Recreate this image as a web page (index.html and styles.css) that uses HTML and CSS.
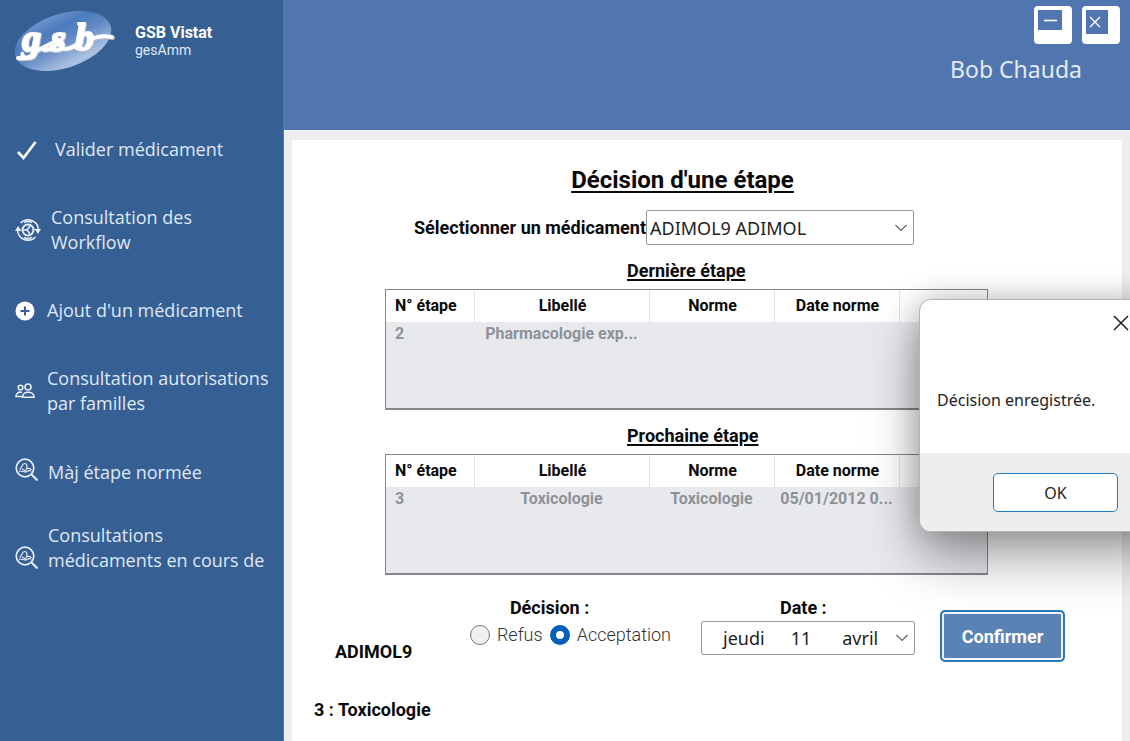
FILE: index.html
```html
<!DOCTYPE html>
<html lang="fr">
<head>
<meta charset="utf-8">
<title>GSB Vistat - gesAmm</title>
<link rel="stylesheet" href="styles.css">
</head>
<body>
<div class="app">
  <aside class="sidebar">
    <div class="brand">
      <svg class="logo" viewBox="0 0 100 64" role="img" aria-label="gsb">
        <defs>
          <linearGradient id="oval" x1="0" y1="0" x2="0.300" y2="1">
            <stop offset="0" stop-color="#7fa3d6"/>
            <stop offset="0.350" stop-color="#4b7abc"/>
            <stop offset="0.600" stop-color="#5f88c4"/>
            <stop offset="1" stop-color="#a9bfe0"/>
          </linearGradient>
        </defs>
        <ellipse cx="49" cy="32" rx="50" ry="27" transform="rotate(-18 49 32)" fill="url(#oval)"/>
        <g class="logo-mark">
          <path class="logo-swash" d="M4 49Q15 51 22 42L38 34M30 41Q38 42 48 30M50 40Q58 40 67 32M80 29Q87 26 98 28"/>
          <text x="8" y="42" class="logo-text">g</text>
          <text x="37" y="42" class="logo-text">s</text>
          <text x="61" y="41" class="logo-text">b</text>
        </g>
      </svg>
      <div class="brand-text">
        <strong>GSB Vistat</strong>
        <span>gesAmm</span>
      </div>
    </div>
    <nav class="nav">
      <a href="#" class="nav-item nav-check">
        <svg width="20" height="20" viewBox="0 0 20 20"><path d="M1 12 L6.500 18 L18.500 2" fill="none" stroke="#fff" stroke-width="2.600"/></svg>
        <span>Valider médicament</span>
      </a>
      <a href="#" class="nav-item nav-flow">
        <svg width="26" height="24" viewBox="0 0 26 24" fill="none" stroke="#e6eef8" stroke-width="1.500"><circle cx="13" cy="12" r="5.500" stroke-width="2"/><path d="M8 12h4l3-4M12 12l3 4"/><path d="M5.500 5A10.400 10.400 0 0 1 23.400 12M20.500 19A10.400 10.400 0 0 1 2.600 12M9 4.600A8.400 8.400 0 0 1 17 4.600M17 19.400A8.400 8.400 0 0 1 9 19.400"/><path d="M0 13l3-5 3.500 5zM19.500 11H26l-3 5z" fill="#e6eef8" stroke="none"/></svg>
        <span>Consultation des Workflow</span>
      </a>
      <a href="#" class="nav-item nav-add">
        <svg width="20" height="20" viewBox="0 0 20 20"><circle cx="10" cy="10" r="9.500" fill="#fff"/><path d="M10 5.500v9M5.500 10h9" stroke="#365f94" stroke-width="2"/></svg>
        <span>Ajout d'un médicament</span>
      </a>
      <a href="#" class="nav-item nav-family">
        <svg width="20" height="16" viewBox="0 0 20 16" fill="none" stroke="#e6eef8" stroke-width="1.600"><circle cx="5.500" cy="4.500" r="2.300"/><circle cx="13" cy="4" r="3"/><path d="M7.500 14.200c0-6.700 11.500-6.700 11.500 0zM7 13.500H1c0-3.500 3-5 6-4"/></svg>
        <span>Consultation autorisations par familles</span>
      </a>
      <a href="#" class="nav-item nav-step">
        <svg width="24" height="24" viewBox="0 0 24 24" fill="none" stroke="#e6eef8"><circle cx="10" cy="10" r="8.800" stroke-width="1.700"/><path d="M16.500 16.500l6 6" stroke-width="2"/><path d="M4.500 11.500c2-1 2.500-6 5-6s3 3 2 5.500c2-1 4-.500 5 1M4 13.500c3-2 5 2 8 0s4 0 4 0M7 11l4 2" stroke-width="1.200"/></svg>
        <span>Màj étape normée</span>
      </a>
      <a href="#" class="nav-item nav-current">
        <svg width="24" height="24" viewBox="0 0 24 24" fill="none" stroke="#e6eef8"><circle cx="10" cy="10" r="8.800" stroke-width="1.700"/><path d="M16.500 16.500l6 6" stroke-width="2"/><path d="M4.500 11.500c2-1 2.500-6 5-6s3 3 2 5.500c2-1 4-.500 5 1M4 13.500c3-2 5 2 8 0s4 0 4 0M7 11l4 2" stroke-width="1.200"/></svg>
        <span>Consultations médicaments en cours de</span>
      </a>
    </nav>
  </aside>

  <div class="workspace">
    <header class="topbar">
      <div class="window-buttons">
        <button type="button" class="win-btn" aria-label="Réduire"><svg width="24" height="20" viewBox="0 0 24 20"><path d="M0 0h24v20H0z" fill="#5175af"/><path d="M6 10.500h13" stroke="#fff" stroke-width="1.600"/></svg></button>
        <button type="button" class="win-btn" aria-label="Fermer"><svg width="22" height="24" viewBox="0 0 22 24"><path d="M0 0h22v24H0z" fill="#5175af"/><path d="M4 7l10 10M14 7L4 17" stroke="#fff" stroke-width="1.400"/></svg></button>
      </div>
      <span class="user">Bob Chauda</span>
    </header>

    <main class="page">
      <section class="panel">
        <div class="content">
          <h1 class="title">Décision d'une étape</h1>
          <div class="picker">
            <label for="med">Sélectionner un médicament</label>
            <div class="select-box">
              <select id="med"><option>ADIMOL9 ADIMOL</option></select>
              <svg class="chevron" width="12" height="8" viewBox="0 0 12 8"><path d="M.500 1l5.500 5.500L11.500 1" fill="none" stroke="#666" stroke-width="1.200"/></svg>
            </div>
          </div>

          <h2 class="subtitle">Dernière étape</h2>
          <div class="grid-box">
            <table class="grid">
              <colgroup><col class="c-num"><col class="c-label"><col class="c-norm"><col class="c-norm"><col></colgroup>
              <thead><tr><th>N° étape</th><th>Libellé</th><th>Norme</th><th>Date norme</th><th></th></tr></thead>
              <tbody><tr><td>2</td><td>Pharmacologie exp...</td><td></td><td></td><td></td></tr></tbody>
            </table>
          </div>

          <h2 class="subtitle">Prochaine étape</h2>
          <div class="grid-box">
            <table class="grid">
              <colgroup><col class="c-num"><col class="c-label"><col class="c-norm"><col class="c-norm"><col></colgroup>
              <thead><tr><th>N° étape</th><th>Libellé</th><th>Norme</th><th>Date norme</th><th></th></tr></thead>
              <tbody><tr><td>3</td><td>Toxicologie</td><td>Toxicologie</td><td>05/01/2012 0...</td><td></td></tr></tbody>
            </table>
          </div>
        </div>

        <form class="decision">
          <strong class="code">ADIMOL9</strong>
          <fieldset class="choice">
            <legend>Décision :</legend>
            <div class="radios">
              <label><input type="radio" name="decision">Refus</label>
              <label><input type="radio" name="decision" checked>Acceptation</label>
            </div>
          </fieldset>
          <div class="date">
            <label for="date">Date :</label>
            <button type="button" id="date" class="date-btn">
              <span>jeudi</span><span>11</span><span>avril</span>
              <svg width="12" height="8" viewBox="0 0 12 8"><path d="M.500 1l5.500 5.500L11.500 1" fill="none" stroke="#666" stroke-width="1.200"/></svg>
            </button>
          </div>
          <button type="button" class="confirm">Confirmer</button>
        </form>
        <strong class="step">3 : Toxicologie</strong>
      </section>
    </main>
  </div>

  <div class="dialog" role="dialog" aria-label="Décision enregistrée">
    <div class="dialog-body">
      <button type="button" class="dialog-close" aria-label="Fermer"><svg width="16" height="16" viewBox="0 0 16 16"><path d="M1 1l14 14M15 1L1 15" stroke="#222" stroke-width="1.500"/></svg></button>
      <p>Décision enregistrée.</p>
    </div>
    <div class="dialog-actions"><button type="button" class="ok">OK</button></div>
  </div>
</div>
</body>
</html>
```

FILE: styles.css
```css
* { box-sizing: border-box; }
body { margin: 0; font-family: Roboto, "Liberation Sans", sans-serif; color: #0a0a0a; background: #eee; }
button, select, input { font: inherit; color: inherit; margin: 0; }
h1, h2, p { margin: 0; }
svg { display: block; flex: none; }

.app { position: relative; display: flex; min-height: 100vh; overflow: hidden; }

.sidebar { flex: 0 0 284px; background: #365f94; color: #dfe8f4; border-right: 1px solid #4f76ab; }
.brand { display: flex; gap: 21px; padding: 9px 0 0 14px; }
.logo { width: 100px; height: 64px; overflow: visible; }
.logo-mark { filter: drop-shadow(1px 1px 0 #b4bac6); }
.logo-text { font: italic bold 38px "Liberation Serif", serif; fill: #fff; stroke: #fff; stroke-width: 2; stroke-linejoin: round; }
.logo-swash { fill: none; stroke: #fff; stroke-width: 4; stroke-linecap: round; }
.brand-text { display: flex; flex-direction: column; padding-top: 15px; font-size: 14px; line-height: 17px; }
.brand-text strong { color: #fff; font-size: 16px; line-height: 18px; }

.nav { display: flex; flex-direction: column; padding: 64px 0 0 15px; gap: 43px; }
.nav-item { display: flex; align-items: center; color: inherit; text-decoration: none; font: 18px/25px "Open Sans", sans-serif; padding-right: 12px; }
.nav-check { gap: 18px; padding-left: 2px; }
.nav-flow { gap: 10px; padding-right: 56px; }
.nav-add, .nav-family { gap: 12px; }
.nav-step, .nav-current { gap: 9px; }
.nav-family { padding-right: 2px; }
.nav-step { margin-top: -1px; }
.nav-step svg { margin-bottom: 4px; }
.nav-current { margin-top: -6px; align-items: flex-end; }
.nav-current svg { margin-bottom: 3px; }

.workspace { flex: 1; min-width: 0; display: flex; flex-direction: column; }
.topbar { height: 130px; background: #5175af; color: #e2eaf6; display: flex; flex-direction: column; align-items: flex-end; padding: 6px 10px 0 0; gap: 8px; }
.window-buttons { display: flex; gap: 10px; }
.win-btn { width: 38px; height: 38px; padding: 4px; border: 0; border-radius: 4px; background: #fff; display: flex; align-items: flex-start; }
.user { font: 23px/34px "Noto Sans", sans-serif; padding-right: 38px; }

.page { flex: 1; display: flex; padding: 10px 8px 0; }
.panel { flex: 1; background: #fff; padding-top: 24px; }
.content { margin: 0 134px 0 93px; }
.title { text-align: center; font-size: 24px; line-height: 32px; text-decoration: underline; text-decoration-thickness: 2px; text-underline-offset: 3px; padding-right: 8px; }
.picker { display: flex; justify-content: flex-end; align-items: center; padding: 14px 74px 0 0; font-size: 18px; font-weight: bold; }
.select-box { position: relative; width: 268px; }
.select-box select { appearance: none; width: 100%; height: 35px; border: 1px solid #999; border-radius: 2px; background: #fff; padding: 0 30px 0 3px; font: 18px "Noto Sans", sans-serif; color: #222; }
.chevron { position: absolute; right: 7px; top: 14px; pointer-events: none; }
.subtitle { font-size: 18px; line-height: 24px; margin: 14px 0 6px 242px; text-decoration: underline; text-underline-offset: 2px; text-decoration-thickness: 2px; }

.grid-box { height: 121px; border: 1px solid #85878c; border-bottom-width: 2px; background: #e8e9ed; }
.grid { width: 100%; table-layout: fixed; border-collapse: collapse; font-size: 16px; line-height: 24px; }
.c-num { width: 88px; }
.c-label { width: 175px; }
.c-norm { width: 125px; }
.grid th { height: 32px; padding: 0 0 0 2px; background: #fff; border-right: 1px solid #e4e4e6; }
.grid th:last-child { border-right: 0; }
.grid td { padding: 0; text-align: center; color: #8d9299; font-weight: bold; white-space: nowrap; }
.grid th:first-child, .grid td:first-child { text-align: left; padding-left: 9px; }

.decision { display: flex; padding: 21px 57px 0 43px; font-size: 18px; }
.code { flex: 1; padding-top: 45px; line-height: 22px; }
.choice { border: 0; margin: 0; padding: 0; min-width: 0; }
.choice legend { padding: 0 0 0 40px; font-weight: bold; line-height: 24px; }
.radios { display: flex; gap: 7px; color: #333; font-weight: 300; line-height: 22px; padding-top: 4px; }
.radios label { display: flex; align-items: center; gap: 7px; }
.radios input { appearance: none; width: 20px; height: 20px; border: 1px solid #777; border-radius: 50%; background: #f1f1f1; }
.radios input:checked { border: 6px solid #005fb8; background: #fff; }
.date { display: flex; flex-direction: column; width: 214px; margin-left: 30px; font-weight: bold; line-height: 24px; }
.date label { padding-left: 79px; }
.date-btn { display: flex; align-items: center; height: 34px; padding: 0 6px 0 21px; border: 1px solid #999; border-radius: 2px; background: #fff; font: 18px "Noto Sans", sans-serif; color: #222; margin-top: 1px; }
.date-btn span + span { margin-left: 26px; }
.date-btn span:nth-child(3) { margin-left: 31px; }
.date-btn svg { margin-left: auto; }
.confirm { width: 125px; height: 52px; margin: 14px 0 0 25px; border: 2px solid #2f78b7; border-radius: 5px; background: #5a82b5; color: #fff; font-size: 18px; font-weight: bold; box-shadow: inset 0 0 0 2px #eaf6ff; }
.step { display: block; padding: 36px 0 0 22px; font-size: 18px; line-height: 22px; }

.dialog { position: absolute; top: 299px; right: -40px; width: 251px; border: 1px solid #b4b4b4; border-radius: 12px; background: #fff; box-shadow: 0 26px 52px rgba(0, 0, 0, 0.36), 0 0 30px rgba(0, 0, 0, 0.2); overflow: hidden; font-family: "Noto Sans", sans-serif; color: #222; }
.dialog-body { height: 153px; padding: 15px 40px 0 17px; display: flex; flex-direction: column; }
.dialog-close { align-self: flex-end; padding: 0; border: 0; background: none; }
.dialog-body p { font-size: 16px; line-height: 24px; margin-top: 57px; }
.dialog-actions { height: 78px; padding: 20px 51px 0 0; background: #eee; display: flex; justify-content: flex-end; align-items: flex-start; }
.dialog .ok { width: 125px; height: 39px; border: 1px solid #1a7ac4; border-radius: 5px; background: #fff; font-size: 16px; }
```
